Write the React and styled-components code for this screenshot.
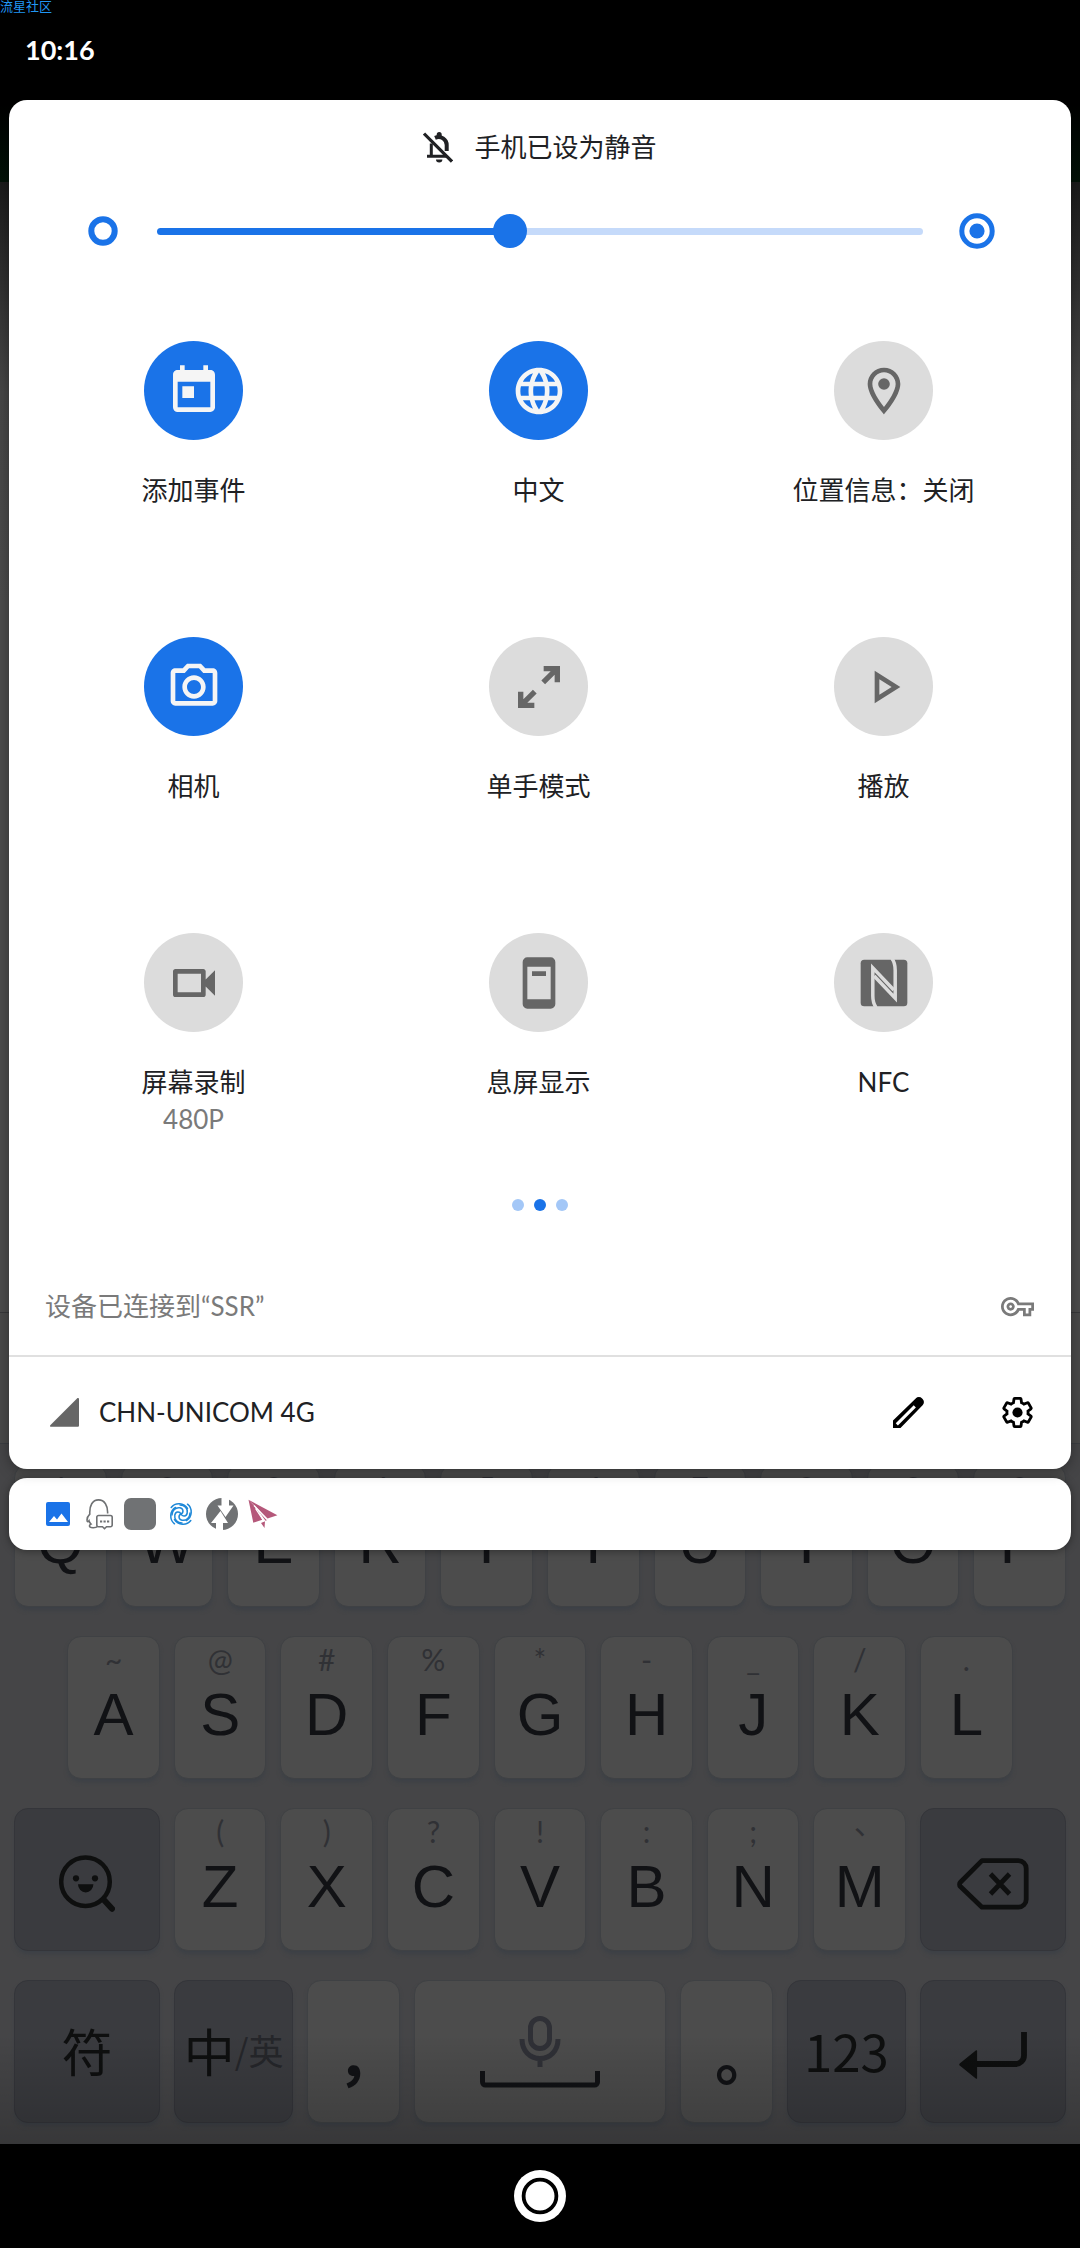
import { useState } from 'react';
import styled, { createGlobalStyle, css } from 'styled-components';
import {
  MdLanguage,
  MdOutlineLocationOn,
  MdOutlinePhotoCamera,
  MdOutlinePlayArrow,
  MdOutlineVideocam,
  MdOutlineVpnKey,
  MdToday,
} from 'react-icons/md';

const theme = {
  blue: '#1a73e8',
  blueTrack: '#c5dafa',
  tileOff: '#dcdcdc',
  iconOff: '#666666',
  iconOn: '#f5f5f5',
  text: '#202124',
  textMuted: '#7a7a7a',
  key: '#4c4c4c',
  keyDark: '#3a3b3f',
  keyText: '#111215',
  keyHint: '#303135',
  uiFont: "Lato, 'Noto Sans CJK SC', sans-serif",
  cjkFont: "'Noto Sans CJK SC', sans-serif",
};

const GlobalStyle = createGlobalStyle`
  * {
    box-sizing: border-box;
  }

  body {
    margin: 0;
    background: #000;
    font-family: ${theme.uiFont};
  }

  button {
    margin: 0;
    padding: 0;
    border: none;
    background: none;
    font: inherit;
    color: inherit;
    cursor: pointer;
  }

  svg {
    display: block;
    flex: none;
  }
`;

/* Backdrop and shade share one grid cell, the shade is on top */
const Screen = styled.div`
  display: grid;
  min-height: 100vh;
  background: #000;

  > * {
    grid-area: 1 / 1;
    min-width: 0;
  }
`;

const Backdrop = styled.div`
  display: flex;
  flex-direction: column;
`;

const StatusBackdrop = styled.div`
  height: 182px;
  background: linear-gradient(#000 100px, #021207);
`;

const AppBackdrop = styled.div`
  flex: 1;
  background: linear-gradient(#1b1b1b, #474747 210px, #4c4c4c 420px);
`;

const InputBackdrop = styled.div`
  height: 131px;
  border-top: 1px solid #38393b;
  background: #4a4a4a;
`;

const Keyboard = styled.div`
  position: relative;
  display: flex;
  flex-direction: column;
  gap: 29px;
  padding: 20px 7px 21px;
  border-top: 1px solid #3c3e42;
  background: #454547;

  &::after {
    content: '';
    position: absolute;
    inset: auto 0 0;
    height: 110px;
    background: linear-gradient(transparent, rgba(0, 0, 0, 0.2));
    pointer-events: none;
  }
`;

const KeyRow = styled.div`
  display: grid;
  grid-template-columns: repeat(40, 1fr);
`;

const Key = styled.button`
  grid-column: ${props => (props.$start ? `${props.$start} / ` : '')}span ${props => props.$span || 4};
  display: flex;
  flex-direction: column;
  align-items: center;
  height: 143px;
  margin: 0 7px;
  border: 1px solid #3f4144;
  border-radius: 14px;
  background: ${theme.key};
  box-shadow: 0 4px 4px -1px #3c4046;
  color: ${theme.keyText};

  ${props => props.$dark && css`
    justify-content: center;
    border-color: #34353a;
    background: ${theme.keyDark};
    color: #0e0f0f;
  `}

  ${props => props.$center && css`
    justify-content: center;
  `}

  ${props => props.$icon && css`
    padding-top: 8px;
  `}
`;

const KeyHint = styled.span`
  height: 48px;
  padding-top: 4px;
  font-family: Lato, 'Noto Sans CJK TC', sans-serif;
  font-size: 30px;
  line-height: 36px;
  color: ${theme.keyHint};
`;

const KeyLetter = styled.span`
  font-family: 'Liberation Sans', Arial, sans-serif;
  font-size: 60px;
  line-height: 60px;
`;

const KeyText = styled.span`
  padding-bottom: 4px;
  font-family: ${theme.cjkFont};
  font-size: 51px;
  line-height: 60px;
`;

const KeyLang = styled(KeyText)`
  display: flex;
  align-items: center;

  small {
    font-size: 35px;
    line-height: 60px;
    color: #25262a;
  }
`;

const KeyMark = styled.span`
  padding-top: 40px;
  font-family: 'Noto Sans CJK TC', sans-serif;
  font-size: 60px;
  font-weight: 700;
  line-height: 64px;
`;

const NavBar = styled.nav`
  display: flex;
  align-items: center;
  justify-content: center;
  height: 104px;
  background: #000;
`;

const Shade = styled.main`
  position: relative;
  z-index: 1;
  align-self: start;
  display: flex;
  flex-direction: column;
`;

const StatusBar = styled.header`
  height: 100px;
  color: #fff;
`;

const Watermark = styled.div`
  height: 32px;
  font-size: 13px;
  line-height: 13px;
  color: #2196f3;
`;

const Clock = styled.div`
  padding-left: 25px;
  font-size: 27px;
  font-weight: 700;
  line-height: 36px;
`;

const Panel = styled.section`
  position: relative;
  z-index: 1;
  margin: 0 9px;
  border-radius: 18px;
  background: #fff;
  box-shadow: 0 2px 14px rgba(0, 0, 0, 0.35);
  color: ${theme.text};
  font-size: 26px;
  line-height: 37px;
`;

const SilentNotice = styled.div`
  display: flex;
  align-items: center;
  justify-content: center;
  gap: 21px;
  height: 94px;
`;

const Brightness = styled.div`
  display: flex;
  align-items: center;
  gap: 36px;
  height: 74px;
  padding: 0 76px;
`;

const Slider = styled.input`
  flex: 1;
  min-width: 0;
  height: 34px;
  margin: 0;
  appearance: none;
  background: none;

  &::-webkit-slider-runnable-track {
    height: 7px;
    border-radius: 4px;
    background: linear-gradient(
      to right,
      ${theme.blue} var(--level),
      ${theme.blueTrack} var(--level)
    );
  }

  &::-webkit-slider-thumb {
    appearance: none;
    width: 34px;
    height: 34px;
    margin-top: -14px;
    border-radius: 50%;
    background: ${theme.blue};
  }
`;

const TileGrid = styled.div`
  display: grid;
  grid-template-columns: repeat(3, 1fr);
  grid-auto-rows: 296px;
  padding: 73px 15px 0 12px;
`;

const Tile = styled.button`
  display: flex;
  flex-direction: column;
  align-items: center;
  align-self: start;
`;

const TileIcon = styled.span`
  display: flex;
  align-items: center;
  justify-content: center;
  width: 99px;
  height: 99px;
  margin-bottom: 32px;
  border-radius: 50%;
  background: ${props => (props.$on ? theme.blue : theme.tileOff)};
  color: ${props => (props.$on ? theme.iconOn : theme.iconOff)};
`;

const TileStatus = styled.span`
  color: ${theme.textMuted};
`;

const Pager = styled.div`
  display: flex;
  justify-content: center;
  gap: 10px;
  height: 26px;
  margin-top: -30px;
`;

const Dot = styled.span`
  width: 12px;
  height: 12px;
  border-radius: 50%;
  background: ${props => (props.$active ? theme.blue : '#a3c7f7')};
`;

const VpnRow = styled.div`
  display: flex;
  align-items: center;
  justify-content: space-between;
  height: 132px;
  padding: 32px 37px 0 36px;
  border-bottom: 2px solid #e0e0e0;
  color: ${theme.textMuted};
`;

const FooterRow = styled.footer`
  display: flex;
  align-items: center;
  height: 112px;
  padding: 0 38px 2px 41px;
`;

const Carrier = styled.span`
  flex: 1;
  padding-left: 20px;
`;

const FooterButton = styled.button`
  margin-left: 78px;
  color: #000;
`;

const NotificationBar = styled.section`
  display: flex;
  align-items: center;
  gap: 9px;
  height: 72px;
  margin: 9px 9px 0;
  padding: 0 33px;
  border-radius: 18px;
  background: #fff;
  box-shadow: 0 1px 8px rgba(0, 0, 0, 0.4);
`;

const BellOffIcon = () => (
  <svg width="30" height="31" viewBox="0 0 30 31" fill="none" stroke="#202124">
    <path d="M1 1.6l28 28" strokeWidth="3.2" />
    <path d="M4 24.2h20M8.3 24V11.5" strokeWidth="3" />
    <path d="M12 5.8c6-2.6 11.7 1.6 11.7 7.2v6" strokeWidth="4" />
    <path d="M13.7 5V2.5a2.5 2.5 0 0 1 5 0V5zM13 27.4h6.4a3.2 3 0 0 1-6.4 0z" fill="#202124" stroke="none" />
  </svg>
);

const DimIcon = () => (
  <svg width="36" height="36" viewBox="0 0 36 36">
    <circle cx="18" cy="18" r="11.7" fill="none" stroke={theme.blue} strokeWidth="6" />
  </svg>
);

const BrightIcon = () => (
  <svg width="36" height="36" viewBox="0 0 36 36">
    <circle cx="18" cy="18" r="15.2" fill="none" stroke={theme.blue} strokeWidth="5" />
    <circle cx="18" cy="18" r="7.6" fill={theme.blue} />
  </svg>
);

const OneHandIcon = () => (
  <svg width="56" height="56" viewBox="0 0 24 24" fill="currentColor">
    <path d="M14 3h7v7h-2.3V6.800l-4.100 4-1.600-1.600L17 5.300h-3zM10 21H3v-7h2.300v3.200l4.100-4 1.600 1.600L7 18.700h3z" />
  </svg>
);

const AmbientIcon = () => (
  <svg width="56" height="56" viewBox="0 0 24 24" fill="currentColor">
    <path d="M17 1H7a2 2 0 0 0-2 2v18a2 2 0 0 0 2 2h10a2 2 0 0 0 2-2V3a2 2 0 0 0-2-2zm0 18H7V5h10v14zM9 7h6v2H9z" />
  </svg>
);

const NfcIcon = () => (
  <svg width="56" height="56" viewBox="0 0 24 24">
    <rect x="2" y="2" width="20" height="20" rx="1.5" fill="currentColor" />
    <g fill="none" stroke={theme.tileOff} strokeWidth="1.5" strokeMiterlimit="10">
      <path d="M8.6 22.5C7.5 21 7.2 19.5 7.2 17.5V5.500l9 9.500" />
      <path d="M15.4 1.5c1.100 1.500 1.400 3 1.400 5v12l-9-9.500" />
    </g>
  </svg>
);

const SignalIcon = () => (
  <svg width="29" height="29" viewBox="0 0 29 29">
    <path d="M27 .5c.9-.9 2-.4 2 .6v26.400c0 .8-.5 1.300-1.300 1.300H1.300c-1.300 0-1.700-1-.8-1.900z" fill={theme.iconOff} />
  </svg>
);

const EditIcon = () => (
  <svg width="31" height="31" viewBox="0 0 31 31">
    <path d="M0 31v-7.500L22.700 1.400a4.500 4.500 0 0 1 6.400 0l.5.500a4.500 4.500 0 0 1 0 6.400L7.500 31z" />
    <path d="M3.800 27.400L21.800 9.400" stroke="#fff" strokeWidth="3" />
  </svg>
);

const SettingsIcon = () => (
  <svg width="31" height="31" viewBox="1 1 22 22">
    <path
      d="M19.43 12.98c.04-.32.07-.64.07-.98s-.03-.66-.07-.98l2.11-1.65c.19-.15.24-.42.12-.64l-2-3.46a.5.5 0 0 0-.61-.22l-2.49 1c-.52-.4-1.08-.73-1.69-.98l-.38-2.65A.488.488 0 0 0 14 2h-4c-.25 0-.46.18-.49.42l-.38 2.65c-.61.25-1.17.59-1.69.98l-2.49-1a.5.5 0 0 0-.61.22l-2 3.46c-.13.22-.07.49.12.64l2.11 1.65c-.04.32-.07.65-.07.98s.03.66.07.98l-2.11 1.65c-.19.15-.24.42-.12.64l2 3.46c.12.22.39.3.61.22l2.49-1c.52.4 1.08.73 1.69.98l.38 2.65c.03.24.24.42.49.42h4c.25 0 .46-.18.49-.42l.38-2.65c.61-.25 1.17-.59 1.69-.98l2.49 1c.22.08.49 0 .61-.22l2-3.46c.12-.22.07-.49-.12-.64z"
      fill="none"
      stroke="currentColor"
      strokeWidth="2"
    />
    <circle cx="12" cy="12" r="3.6" fill="currentColor" />
  </svg>
);

const PictureIcon = () => (
  <svg width="32" height="32" viewBox="0 0 32 32">
    <rect x="4" y="4" width="24" height="24" rx="2" fill={theme.blue} />
    <path d="M7 24l5-6 3 3.5 4.500-6L26 24z" fill="#fff" />
  </svg>
);

const PenguinIcon = () => (
  <svg width="32" height="32" viewBox="0 0 32 32" fill="none" stroke="#6f7173" strokeWidth="1.6">
    <path d="M14.5 28.500c-1.500 1.600-8 1.800-8-.5 0-1 .7-1.600 1.500-2-1-.9-1.700-2.100-2-3.300-.9 1.300-2 1.500-2-.7 0-2 1-4.200 2.800-5.900C6.300 7.500 9.500 1.900 15.500 1.900S25 7.500 24.600 15.500" />
    <path d="M15.5 17.500h12a1.700 1.700 0 0 1 1.700 1.700v7.800a1.700 1.700 0 0 1-1.700 1.700h-4l-2 2-2-2h-4a1.700 1.700 0 0 1-1.700-1.700v-7.800a1.700 1.700 0 0 1 1.700-1.700z" />
    <path d="M17 23.500h2.200M20.500 23.500h2.200M24 23.500h2.200" strokeWidth="2" />
  </svg>
);

const BlankAppIcon = () => (
  <svg width="32" height="32" viewBox="0 0 32 32">
    <rect width="32" height="32" rx="7" fill="#707274" />
  </svg>
);

const SwirlIcon = () => (
  <svg width="32" height="32" viewBox="0 0 32 32" fill="none" stroke="#1e88d8" strokeWidth="1.5" strokeLinecap="round">
    {[0, 90, 180, 270].map(angle => (
      <g key={angle} transform={`rotate(${angle} 16 16)`}>
        <path d="M16 16c3-1.500 2.500-5.500-1-6.200C10.500 9 7 12.500 7 17" />
        <path d="M22.5 10.500C19 4.800 10.500 4 6.200 9.500" />
      </g>
    ))}
  </svg>
);

const RecoveryIcon = () => (
  <svg width="32" height="32" viewBox="0 0 32 32">
    <circle cx="16" cy="16" r="16" fill="#707274" />
    <path d="M15.5 0H23v7.500h4.500L19.500 19l-8-11.500h4zM17 32h-7v-7H5l9.500-12L22 25h-5z" fill="#fff" />
  </svg>
);

const PlaneIcon = () => (
  <svg width="32" height="32" viewBox="0 0 32 32" fill="#b5587a">
    <path d="M1.5 1.700L30.400 17.300 20.500 20.400zM1.500 1.700l4.800 23 9-3-5.300-11 8.500 12 1.700-.7zM14 25l4-1.800-.5 6.800z" />
    <path d="M7 7.500l13 14M8.500 10.500l8.500 13" stroke="#fff" strokeWidth="1.2" />
  </svg>
);

const EmojiSearchIcon = () => (
  <svg width="56" height="57" viewBox="0 0 56 57" fill="currentColor">
    <circle cx="26.5" cy="26.7" r="24.3" fill="none" stroke="currentColor" strokeWidth="4.5" />
    <circle cx="17" cy="23.3" r="3.1" />
    <circle cx="36" cy="23.3" r="3.1" />
    <path d="M19 29.300h15.400a7.700 8.200 0 0 1-15.400 0z" />
    <path d="M45 45l8 8.700" stroke="currentColor" strokeWidth="6" strokeLinecap="round" />
  </svg>
);

const BackspaceIcon = () => (
  <svg width="72" height="52" viewBox="0 0 72 52" fill="none" stroke="currentColor" strokeWidth="4.8" strokeLinejoin="round">
    <path d="M25 2.600h36.400a7.800 7.800 0 0 1 7.800 7.800v31a7.800 7.800 0 0 1-7.800 7.800H25L3.400 28.500a3 3 0 0 1 0-4.200z" />
    <path d="M33.500 16l19 20M52.500 16l-19 20" />
  </svg>
);

const SpaceIcon = () => (
  <svg width="120" height="72" viewBox="0 0 120 72" fill="none" strokeWidth="5">
    <rect x="50.5" y="2.5" width="19" height="30" rx="9.5" stroke="#2f3036" />
    <path d="M42 23c0 12 8 19.500 18 19.500S78 35 78 23M60 43v8" stroke="#2f3036" />
    <path d="M2.500 55v11a3 3 0 0 0 3 3h109a3 3 0 0 0 3-3V55" stroke={theme.keyText} />
  </svg>
);

const EnterIcon = () => (
  <svg width="68" height="47" viewBox="0 0 68 47">
    <path d="M16 32h40.500a8.500 8.500 0 0 0 8.500-8.500V0" fill="none" stroke="currentColor" strokeWidth="5.8" />
    <path d="M1 31.200L16.800 18.400c.7-.5 1.300-.3 1.300.6v27c0 .9-.6 1.100-1.300.5L1 33.800a1.700 1.700 0 0 1 0-2.600z" fill="currentColor" />
  </svg>
);

const HomeIcon = () => (
  <svg width="52" height="52" viewBox="0 0 52 52">
    <circle cx="26" cy="26" r="26" fill="#fff" />
    <circle cx="26" cy="26" r="16.4" fill="none" stroke="#000" strokeWidth="3.8" />
  </svg>
);

const tiles = [
  { label: '添加事件', icon: <MdToday size={56} />, on: true },
  { label: '中文', icon: <MdLanguage size={56} />, on: true },
  { label: '位置信息：关闭', icon: <MdOutlineLocationOn size={56} /> },
  { label: '相机', icon: <MdOutlinePhotoCamera size={56} />, on: true },
  { label: '单手模式', icon: <OneHandIcon /> },
  { label: '播放', icon: <MdOutlinePlayArrow size={56} /> },
  { label: '屏幕录制', icon: <MdOutlineVideocam size={56} />, status: '480P' },
  { label: '息屏显示', icon: <AmbientIcon /> },
  { label: 'NFC', icon: <NfcIcon /> },
];

const topKeys = ['Q1', 'W2', 'E3', 'R4', 'T5', 'Y6', 'U7', 'I8', 'O9', 'P0'];
const homeKeys = ['A~', 'S@', 'D#', 'F%', 'G*', 'H-', 'J_', 'K/', 'L.'];
const bottomKeys = ['Z(', 'X)', 'C?', 'V!', 'B:', 'N;', 'M、'];

const LetterKey = ({ chars, start }) => (
  <Key type="button" $start={start}>
    <KeyHint>{chars[1]}</KeyHint>
    <KeyLetter>{chars[0]}</KeyLetter>
  </Key>
);

const App = () => {
  const [level, setLevel] = useState(459);

  return (
    <>
      <GlobalStyle />
      <Screen lang="zh-CN">
        <Backdrop>
          <StatusBackdrop />
          <AppBackdrop />
          <InputBackdrop />
          <Keyboard>
            <KeyRow>
              {topKeys.map(chars => <LetterKey key={chars} chars={chars} />)}
            </KeyRow>
            <KeyRow>
              {homeKeys.map((chars, i) => (
                <LetterKey key={chars} chars={chars} start={i === 0 ? 3 : undefined} />
              ))}
            </KeyRow>
            <KeyRow>
              <Key type="button" $span={6} $dark $icon aria-label="表情"><EmojiSearchIcon /></Key>
              {bottomKeys.map(chars => <LetterKey key={chars} chars={chars} />)}
              <Key type="button" $span={6} $dark $icon aria-label="删除"><BackspaceIcon /></Key>
            </KeyRow>
            <KeyRow>
              <Key type="button" $span={6} $dark><KeyText>符</KeyText></Key>
              <Key type="button" $span={5} $dark>
                <KeyLang>中<small>/英</small></KeyLang>
              </Key>
              <Key type="button" $center><KeyMark lang="zh-TW">，</KeyMark></Key>
              <Key type="button" $span={10} $center aria-label="空格"><SpaceIcon /></Key>
              <Key type="button" $center><KeyMark lang="zh-TW">。</KeyMark></Key>
              <Key type="button" $span={5} $dark><KeyText>123</KeyText></Key>
              <Key type="button" $span={6} $dark $icon aria-label="换行"><EnterIcon /></Key>
            </KeyRow>
          </Keyboard>
          <NavBar>
            <button type="button" aria-label="主屏幕"><HomeIcon /></button>
          </NavBar>
        </Backdrop>

        <Shade>
          <StatusBar>
            <Watermark>流星社区</Watermark>
            <Clock>10:16</Clock>
          </StatusBar>
          <Panel>
            <SilentNotice>
              <BellOffIcon />
              <span>手机已设为静音</span>
            </SilentNotice>
            <Brightness>
              <DimIcon />
              <Slider
                type="range"
                aria-label="亮度"
                min="0"
                max="1000"
                value={level}
                onChange={e => setLevel(Number(e.target.value))}
                style={{ '--level': `${level / 10}%` }}
              />
              <BrightIcon />
            </Brightness>
            <TileGrid>
              {tiles.map(tile => (
                <Tile key={tile.label} type="button" aria-pressed={Boolean(tile.on)}>
                  <TileIcon $on={tile.on}>{tile.icon}</TileIcon>
                  <span>{tile.label}</span>
                  {tile.status && <TileStatus>{tile.status}</TileStatus>}
                </Tile>
              ))}
            </TileGrid>
            <Pager>
              <Dot />
              <Dot $active />
              <Dot />
            </Pager>
            <VpnRow>
              <span>设备已连接到“SSR”</span>
              <MdOutlineVpnKey size={33} />
            </VpnRow>
            <FooterRow>
              <SignalIcon />
              <Carrier>CHN-UNICOM 4G</Carrier>
              <FooterButton type="button" aria-label="编辑"><EditIcon /></FooterButton>
              <FooterButton type="button" aria-label="设置"><SettingsIcon /></FooterButton>
            </FooterRow>
          </Panel>
          <NotificationBar>
            <PictureIcon />
            <PenguinIcon />
            <BlankAppIcon />
            <SwirlIcon />
            <RecoveryIcon />
            <PlaneIcon />
          </NotificationBar>
        </Shade>
      </Screen>
    </>
  );
};

export default App;
